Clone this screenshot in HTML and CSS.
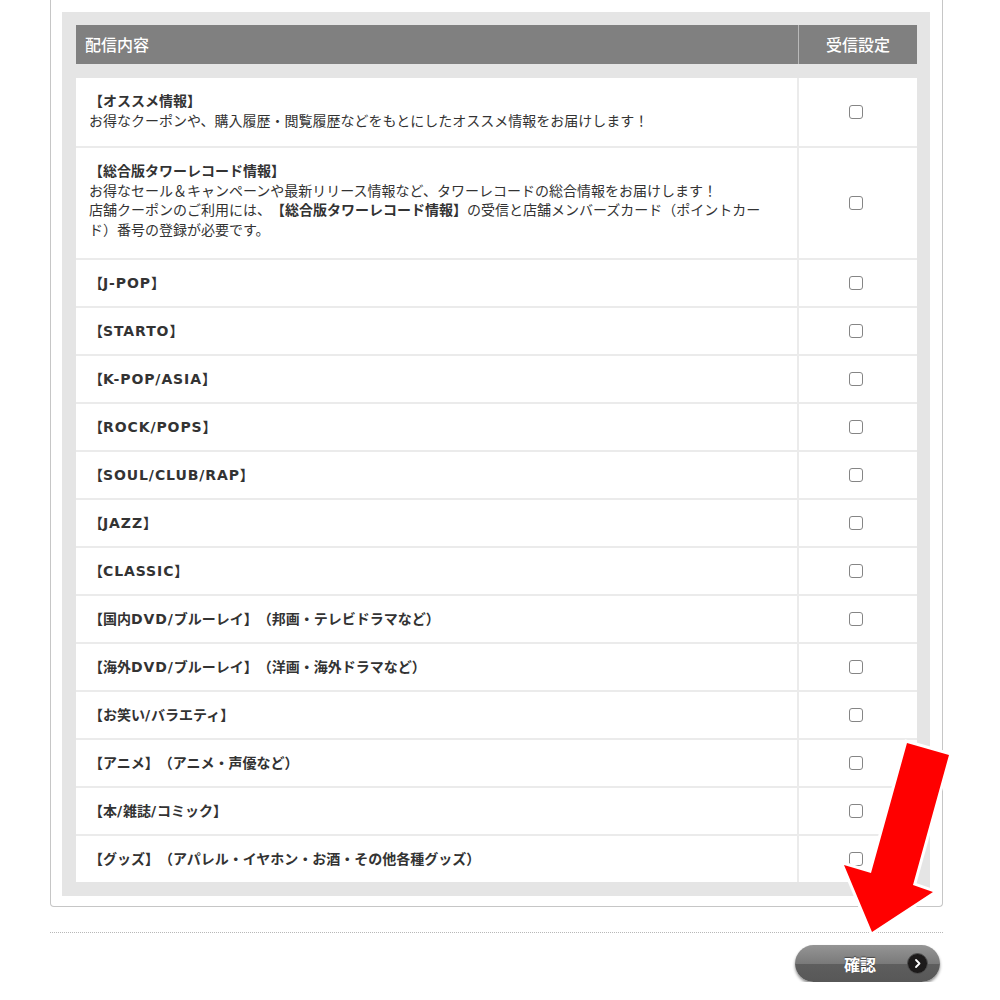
FILE: index.html
```html
<!DOCTYPE html>
<html lang="ja">
<head>
<meta charset="utf-8">
<title>配信設定</title>
<link rel="stylesheet" href="styles.css">
</head>
<body>
<div class="page">
  <div class="card">
    <div class="panel">
      <div class="thead">
        <div class="th th-main">配信内容</div>
        <div class="th th-check">受信設定</div>
      </div>
      <div class="list">
        <div class="row">
          <div class="cell-main">
            <div class="title">【オススメ情報】</div>
            <div class="desc">お得なクーポンや、購入履歴・閲覧履歴などをもとにしたオススメ情報をお届けします！</div>
          </div>
          <div class="cell-check"><input type="checkbox" class="cb"></div>
        </div>
        <div class="row">
          <div class="cell-main tall">
            <div class="title">【総合版タワーレコード情報】</div>
            <div class="desc">お得なセール＆キャンペーンや最新リリース情報など、タワーレコードの総合情報をお届けします！</div>
            <div class="desc">店舗クーポンのご利用には、<b>【総合版タワーレコード情報】</b>の受信と店舗メンバーズカード（ポイントカー</div>
            <div class="desc">ド）番号の登録が必要です。</div>
          </div>
          <div class="cell-check"><input type="checkbox" class="cb"></div>
        </div>
        <div class="row"><div class="cell-main"><div class="title">【<span class="en">J-POP</span>】</div></div><div class="cell-check"><input type="checkbox" class="cb"></div></div>
        <div class="row"><div class="cell-main"><div class="title">【<span class="en">STARTO</span>】</div></div><div class="cell-check"><input type="checkbox" class="cb"></div></div>
        <div class="row"><div class="cell-main"><div class="title">【<span class="en">K-POP/ASIA</span>】</div></div><div class="cell-check"><input type="checkbox" class="cb"></div></div>
        <div class="row"><div class="cell-main"><div class="title">【<span class="en">ROCK/POPS</span>】</div></div><div class="cell-check"><input type="checkbox" class="cb"></div></div>
        <div class="row"><div class="cell-main"><div class="title">【<span class="en">SOUL/CLUB/RAP</span>】</div></div><div class="cell-check"><input type="checkbox" class="cb"></div></div>
        <div class="row"><div class="cell-main"><div class="title">【<span class="en">JAZZ</span>】</div></div><div class="cell-check"><input type="checkbox" class="cb"></div></div>
        <div class="row"><div class="cell-main"><div class="title">【<span class="en">CLASSIC</span>】</div></div><div class="cell-check"><input type="checkbox" class="cb"></div></div>
        <div class="row"><div class="cell-main"><div class="title">【国内<span class="en">DVD/</span>ブルーレイ】（邦画・テレビドラマなど）</div></div><div class="cell-check"><input type="checkbox" class="cb"></div></div>
        <div class="row"><div class="cell-main"><div class="title">【海外<span class="en">DVD/</span>ブルーレイ】（洋画・海外ドラマなど）</div></div><div class="cell-check"><input type="checkbox" class="cb"></div></div>
        <div class="row"><div class="cell-main"><div class="title">【お笑い<span class="en">/</span>バラエティ】</div></div><div class="cell-check"><input type="checkbox" class="cb"></div></div>
        <div class="row"><div class="cell-main"><div class="title">【アニメ】（アニメ・声優など）</div></div><div class="cell-check"><input type="checkbox" class="cb"></div></div>
        <div class="row"><div class="cell-main"><div class="title">【本<span class="en">/</span>雑誌<span class="en">/</span>コミック】</div></div><div class="cell-check"><input type="checkbox" class="cb"></div></div>
        <div class="row"><div class="cell-main"><div class="title">【グッズ】（アパレル・イヤホン・お酒・その他各種グッズ）</div></div><div class="cell-check"><input type="checkbox" class="cb"></div></div>
      </div>
    </div>
  </div>
  <div class="divider"></div>
  <div class="actions">
    <button class="btn-confirm" type="button">
      <span class="btn-label">確認</span>
      <span class="btn-icon">
        <svg width="21" height="21" viewBox="0 0 21 21">
          <circle cx="10.5" cy="10.5" r="10" fill="#1c1a1a" stroke="#505050" stroke-width="1"/>
          <path d="M9 7 L12.5 10.5 L9 14" fill="none" stroke="#fff" stroke-width="1.8" stroke-linecap="round" stroke-linejoin="round"/>
        </svg>
      </span>
    </button>
  </div>
</div>
<svg class="arrow" width="1000" height="1000" viewBox="0 0 1000 1000">
  <polygon points="907,743 949,755 913,885 933,892 872,932 844,865 871,873" fill="#ff0000" stroke="#ffffff" stroke-width="6" stroke-linejoin="miter" paint-order="stroke"/>
</svg>
</body>
</html>
```
FILE: styles.css
```css
html, body {
  margin: 0;
  padding: 0;
  background: #fff;
}
body {
  font-family: "DejaVu Sans", "Noto Sans CJK JP", sans-serif;
  color: #333;
  text-spacing-trim: space-all;
}
.page {
  width: 893px;
  margin-left: 50px;
}
.card {
  border: 1px solid #c6c6c6;
  border-top: none;
  border-radius: 0 0 4px 4px;
  padding: 12px 12px 10px 11px;
}
.panel {
  background: #e5e5e5;
  padding: 13px 13px 14px 14px;
}
.thead {
  display: grid;
  grid-template-columns: 722px 118px;
  gap: 1px;
  background: #b9b9b9;
  margin-bottom: 14px;
}
.th {
  background: #808080;
  color: #fff;
  font-family: "Noto Sans CJK JP", sans-serif;
  font-size: 16px;
  font-weight: 500;
  line-height: 39px;
  height: 39px;
}
.th-main {
  padding-left: 9px;
}
.th-check {
  text-align: center;
}
.list {
  display: flex;
  flex-direction: column;
  gap: 2px;
  background: #ebebeb;
}
.row {
  display: grid;
  grid-template-columns: 721px 118px;
  gap: 2px;
}
.cell-main {
  background: #fff;
  padding: 13px 20px 13px 13px;
  font-size: 14px;
}
.cell-main.tall {
  padding-bottom: 19px;
}
.row:first-child .cell-main {
  padding-bottom: 15px;
}
.title {
  font-weight: bold;
  line-height: 20px;
  height: 20px;
  white-space: nowrap;
}
.en {
  letter-spacing: 0.9px;
}
.desc {
  font-family: "Noto Sans CJK JP", sans-serif;
  line-height: 19.5px;
  white-space: nowrap;
}
.desc b {
  font-weight: bold;
}
.cell-check {
  background: #fff;
  display: flex;
  align-items: center;
  justify-content: center;
}
.cb {
  appearance: none;
  -webkit-appearance: none;
  width: 14px;
  height: 14px;
  margin: 0 4px 0 0;
  border: 1px solid #858585;
  border-radius: 3px;
  background: #fff;
}
.divider {
  margin-top: 25px;
  border-top: 1px dotted #b8b8b8;
}
.actions {
  display: flex;
  justify-content: flex-end;
  padding: 12px 3px 0 0;
}
.btn-confirm {
  width: 145px;
  height: 37px;
  border: none;
  border-radius: 19px;
  padding: 0 12px 0 18px;
  display: flex;
  align-items: center;
  background: linear-gradient(#959595 0%, #7a7a7a 50%, #5e5e5e 52%, #575757 100%);
  box-shadow: 0 2px 3px rgba(0, 0, 0, 0.45);
}
.btn-label {
  flex: 1;
  text-align: center;
  color: #fff;
  font-family: "Noto Sans CJK JP", sans-serif;
  font-weight: bold;
  font-size: 16px;
  line-height: 20px;
  text-shadow: 0 -1px 1px rgba(0, 0, 0, 0.45);
}
.btn-icon {
  display: flex;
  width: 21px;
  height: 21px;
}
.arrow {
  position: absolute;
  left: 0;
  top: 0;
  pointer-events: none;
}
```
